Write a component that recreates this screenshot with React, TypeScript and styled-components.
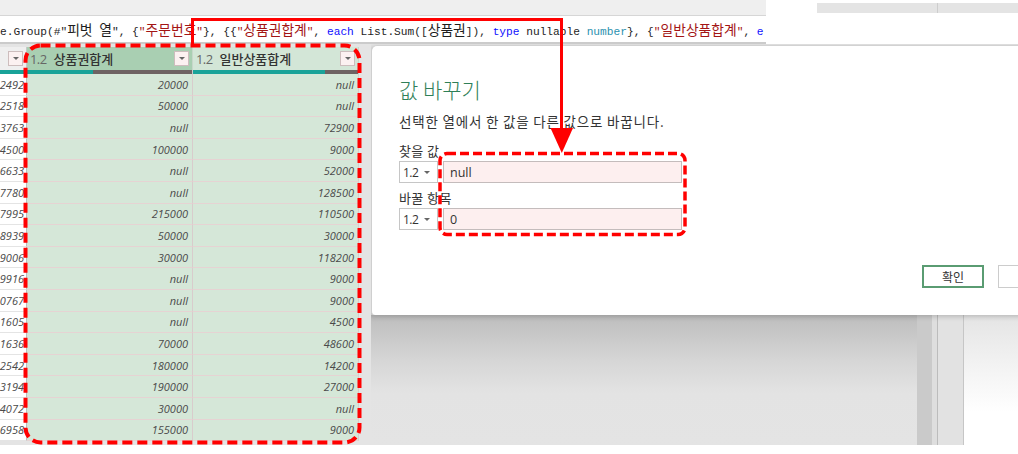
import React from "react";
import styled, { createGlobalStyle } from "styled-components";

const rows: [string, string, string][] = [
  ["2492", "20000", "null"],
  ["2518", "50000", "null"],
  ["3763", "null", "72900"],
  ["4500", "100000", "9000"],
  ["6633", "null", "52000"],
  ["7780", "null", "128500"],
  ["7995", "215000", "110500"],
  ["8939", "50000", "30000"],
  ["9006", "30000", "118200"],
  ["9916", "null", "9000"],
  ["0767", "null", "9000"],
  ["1605", "null", "4500"],
  ["1636", "70000", "48600"],
  ["2542", "180000", "14200"],
  ["3194", "190000", "27000"],
  ["4072", "30000", "null"],
  ["6958", "155000", "9000"],
];

const columns = [
  { name: "상품권합계", valid: 0.4, selected: true },
  { name: "일반상품합계", valid: 0.8, selected: false },
];

export default function App() {
  return (
    <>
      <GlobalStyle />
      <Page>
        <TopBar>
          <EditorArea>
            <Ribbon />
            <FormulaBar>
              <Code>
                e.Group(#"<Ko>피벗</Ko> <Ko>열</Ko>", {"{"}
                <Str>
                  "<Ko>주문번호</Ko>"
                </Str>
                {"}, {{"}
                <Str>
                  "<Ko>상품권합계</Ko>"
                </Str>
                , <Kw>each</Kw> List.Sum([<Ko>상품권</Ko>]), <Kw>type</Kw> nullable <Ty>number</Ty>
                {"}, {"}
                <Str>
                  "<Ko>일반상품합계</Ko>"
                </Str>
                , <Kw>e</Kw>
              </Code>
            </FormulaBar>
          </EditorArea>
          <TopRight>
            <MiniBar>
              <MiniCell $w={120} />
              <MiniCell />
            </MiniBar>
          </TopRight>
        </TopBar>

        <Body>
          <GridPane>
            <Table>
              <HeaderCell $kind="index">
                <DropBtn />
              </HeaderCell>
              {columns.map((c) => (
                <HeaderCell key={c.name} $kind={c.selected ? "selected" : "plain"}>
                  <TypeTag>1.2</TypeTag>
                  <ColName>{c.name}</ColName>
                  <DropBtn />
                </HeaderCell>
              ))}
              <QualityBar>
                <QualityFill style={{ width: "100%" }} />
              </QualityBar>
              {columns.map((c) => (
                <QualityBar key={c.name + "-q"}>
                  <QualityFill style={{ width: `${c.valid * 100}%` }} />
                </QualityBar>
              ))}
              {rows.map((r, i) => (
                <React.Fragment key={i}>
                  <Cell $kind="index">
                    <span>{r[0]}</span>
                  </Cell>
                  <Cell $kind="data">{r[1]}</Cell>
                  <Cell $kind="data">{r[2]}</Cell>
                </React.Fragment>
              ))}
            </Table>
          </GridPane>

          <RightSide>
            <Dialog>
              <Title>값 바꾸기</Title>
              <Subtitle>선택한 열에서 한 값을 다른 값으로 바꿉니다.</Subtitle>
              <FieldLabel>찾을 값</FieldLabel>
              <FieldRow>
                <TypePicker>
                  1.2 <Caret />
                </TypePicker>
                <ValueInput>null</ValueInput>
              </FieldRow>
              <FieldLabel $gap={6}>바꿀 항목</FieldLabel>
              <FieldRow>
                <TypePicker>
                  1.2 <Caret />
                </TypePicker>
                <ValueInput>0</ValueInput>
              </FieldRow>
              <ButtonRow>
                <DialogButton $primary>확인</DialogButton>
                <DialogButton />
              </ButtonRow>
            </Dialog>
            <Backdrop>
              <Shade />
              <Strip $w={15} $bg="#cacaca" />
              <Strip $w={5} $bg="#dedede" />
              <Strip $w={25} $bg="#e2e2e2" $line="#bcbcbc" />
              <Strip $w={1} $bg="#c6c6c6" />
              <WhiteShade />
            </Backdrop>
          </RightSide>
        </Body>
        <Footer />

        <Overlay width={1018} height={454} viewBox="0 0 1018 454">
          <path d="M192.5 44 V19.5 H561.5 V131" fill="none" stroke="#ff0000" strokeWidth={3} />
          <polygon points="550.5,128 573,128 561.8,153" fill="#ff0000" />
          <rect
            x={25.5}
            y={45.5}
            width={334}
            height={397}
            rx={15}
            fill="none"
            stroke="#ff0000"
            strokeWidth={4}
            strokeDasharray="10 5"
          />
          <rect
            x={440}
            y={153.5}
            width={245}
            height={81}
            rx={7}
            fill="none"
            stroke="#ff0000"
            strokeWidth={3.5}
            strokeDasharray="9 4"
          />
        </Overlay>
      </Page>
    </>
  );
}

const GlobalStyle = createGlobalStyle`
  html, body {
    margin: 0;
    padding: 0;
    background: #fff;
  }
  body {
    font-family: "Noto Sans CJK KR", "Noto Sans", sans-serif;
  }
`;

const Page = styled.div`
  position: relative;
  width: 1018px;
  height: 454px;
  overflow: hidden;
  display: flex;
  flex-direction: column;
  background: #fff;
`;

const TopBar = styled.div`
  display: flex;
  height: 44px;
  flex-shrink: 0;
`;

const EditorArea = styled.div`
  width: 766px;
  display: flex;
  flex-direction: column;
`;

const Ribbon = styled.div`
  height: 15px;
  background: #efefef;
`;

const FormulaBar = styled.div`
  height: 29px;
  box-sizing: border-box;
  background: #fff;
  border-top: 1px solid #d6d6d6;
  border-bottom: 2px solid #cbcbcb;
  display: flex;
  align-items: center;
  overflow: hidden;
  white-space: nowrap;
`;

const Code = styled.div`
  font-family: "Liberation Mono", "Noto Sans CJK KR", monospace;
  font-size: 11.2px;
  color: #1e1e1e;
  white-space: pre;
`;

const Ko = styled.span`
  font-family: "Noto Sans CJK KR", sans-serif;
  font-size: 13.8px;
`;

const Str = styled.span`
  color: #a31515;
`;

const Kw = styled.span`
  color: #1010ff;
`;

const Ty = styled.span`
  color: #2b91af;
`;

const TopRight = styled.div`
  flex: 1;
  background: #fff;
  padding: 3px 0 0 51px;
`;

const MiniBar = styled.div`
  height: 10px;
  display: flex;
  background: #e4e4e4;
`;

const MiniCell = styled.div<{ $w?: number }>`
  ${(p) => (p.$w ? `width: ${p.$w}px;` : "flex: 1;")}
  & + & {
    border-left: 1px solid #cdcdcd;
  }
`;

const Body = styled.div`
  display: flex;
  height: 401px;
  flex-shrink: 0;
`;

const GridPane = styled.div`
  width: 371px;
  box-sizing: border-box;
  padding-top: 3px;
  background: #e4e4e4;
`;

const Table = styled.div`
  display: grid;
  width: 359px;
  grid-template-columns: 27px 166px 166px;
  grid-template-rows: 23px 4px repeat(17, 21.6px);
`;

const HeaderCell = styled.div<{ $kind: "index" | "selected" | "plain" }>`
  box-sizing: border-box;
  display: flex;
  align-items: center;
  padding: 0 3px 0 3px;
  border-right: 1px solid ${(p) => (p.$kind === "index" ? "#c8c8c8" : "#c7d7ca")};
  justify-content: ${(p) => (p.$kind === "index" ? "flex-end" : "flex-start")};
  background: ${(p) =>
    p.$kind === "index" ? "#efefef" : p.$kind === "selected" ? "#a9cfb2" : "#d3e6d7"};
`;

const TypeTag = styled.span`
  font-family: "Open Sans", "Liberation Sans", sans-serif;
  font-size: 13px;
  color: #666;
  letter-spacing: -0.6px;
`;

const ColName = styled.span`
  flex: 1;
  margin-left: 7px;
  font-size: 13px;
  color: #333;
  font-weight: 500;
`;

const DropBtn = styled.span`
  width: 15px;
  height: 15px;
  box-sizing: border-box;
  border: 1px solid #cdbdbd;
  background: #fcf1f1;
  display: flex;
  align-items: center;
  justify-content: center;
  &::after {
    content: "";
    border-left: 3px solid transparent;
    border-right: 3px solid transparent;
    border-top: 3px solid #666;
  }
`;

const QualityBar = styled.div`
  background: #6e6363;
  border-right: 1px solid #c9c9c9;
  display: flex;
`;

const QualityFill = styled.div`
  background: #19a399;
`;

const Cell = styled.div<{ $kind: "index" | "data" }>`
  box-sizing: border-box;
  display: flex;
  align-items: center;
  justify-content: flex-end;
  overflow: hidden;
  padding-right: ${(p) => (p.$kind === "index" ? 2 : 4)}px;
  font-family: "Open Sans", "Liberation Sans", sans-serif;
  font-style: italic;
  font-size: 11px;
  color: #4a4a4a;
  white-space: nowrap;
  background: ${(p) => (p.$kind === "index" ? "#fff" : "#d5e7d8")};
  border-right: 1px solid ${(p) => (p.$kind === "index" ? "#bdbdbd" : "#d8cccc")};
  border-bottom: 1px solid ${(p) => (p.$kind === "index" ? "#e4e4e4" : "#e6d3d3")};
`;

const RightSide = styled.div`
  flex: 1;
  display: flex;
  flex-direction: column;
  overflow: hidden;
  background: #e4e4e4;
`;

const Dialog = styled.div`
  width: 720px;
  height: 270px;
  margin-top: 1px;
  flex-shrink: 0;
  box-sizing: border-box;
  padding: 30px 31px 0 27px;
  background: #fff;
  border-top: 1px solid #d2d2d2;
  border-left: 1px solid #cfcfcf;
  border-top-left-radius: 6px;
  border-bottom-left-radius: 4px;
  box-shadow: -2px 2px 5px rgba(0, 0, 0, 0.18);
  display: flex;
  flex-direction: column;
  position: relative;
  z-index: 1;
`;

const Title = styled.div`
  font-size: 21px;
  line-height: 26px;
  font-weight: 300;
  color: #2f7f57;
`;

const Subtitle = styled.div`
  margin-top: 10px;
  font-size: 13.5px;
  line-height: 18px;
  color: #333;
  letter-spacing: 0.8px;
`;

const FieldLabel = styled.div<{ $gap?: number }>`
  margin-top: ${(p) => p.$gap ?? 12}px;
  font-size: 13px;
  line-height: 18px;
  color: #333;
  letter-spacing: 0.4px;
`;

const FieldRow = styled.div`
  display: flex;
  gap: 5px;
  margin-top: 1px;
  height: 22px;
`;

const TypePicker = styled.div`
  width: 39px;
  box-sizing: border-box;
  border: 1px solid #c6c6c6;
  background: #fff;
  display: flex;
  align-items: center;
  gap: 6px;
  padding-left: 3px;
  font-family: "Open Sans", "Liberation Sans", sans-serif;
  font-size: 12px;
  color: #333;
  letter-spacing: -0.5px;
`;

const Caret = styled.span`
  border-left: 3px solid transparent;
  border-right: 3px solid transparent;
  border-top: 3px solid #666;
`;

const ValueInput = styled.div`
  width: 239px;
  box-sizing: border-box;
  border: 1px solid #c4bcbc;
  background: #fdefef;
  display: flex;
  align-items: center;
  padding-left: 6px;
  font-family: "Open Sans", "Liberation Sans", sans-serif;
  font-size: 12.5px;
  color: #333;
`;

const ButtonRow = styled.div`
  display: flex;
  justify-content: flex-end;
  gap: 14px;
  margin-top: 35px;
`;

const DialogButton = styled.div<{ $primary?: boolean }>`
  width: 62px;
  height: 23px;
  box-sizing: border-box;
  display: flex;
  align-items: center;
  justify-content: center;
  font-size: 12px;
  color: #333;
  background: #fff;
  border: ${(p) => (p.$primary ? "2px solid #5a9c72" : "1px solid #cccccc")};
`;

const Backdrop = styled.div`
  flex: 1;
  display: flex;
`;

const Shade = styled.div`
  width: 546px;
  background: linear-gradient(#bdbdbd, #d6d6d6 35%, #e3e3e3 60%, #e4e4e4);
`;

const Strip = styled.div<{ $w: number; $bg: string; $line?: string }>`
  width: ${(p) => p.$w}px;
  background: ${(p) => p.$bg};
  ${(p) => (p.$line ? `border-left: 1px solid ${p.$line};` : "")}
`;

const WhiteShade = styled.div`
  flex: 1;
  background: linear-gradient(#e4e4e4, #f3f3f3 40%, #fff 75%);
`;

const Footer = styled.div`
  flex: 1;
  background: #fff;
`;

const Overlay = styled.svg`
  position: absolute;
  left: 0;
  top: 0;
  pointer-events: none;
  z-index: 5;
`;
